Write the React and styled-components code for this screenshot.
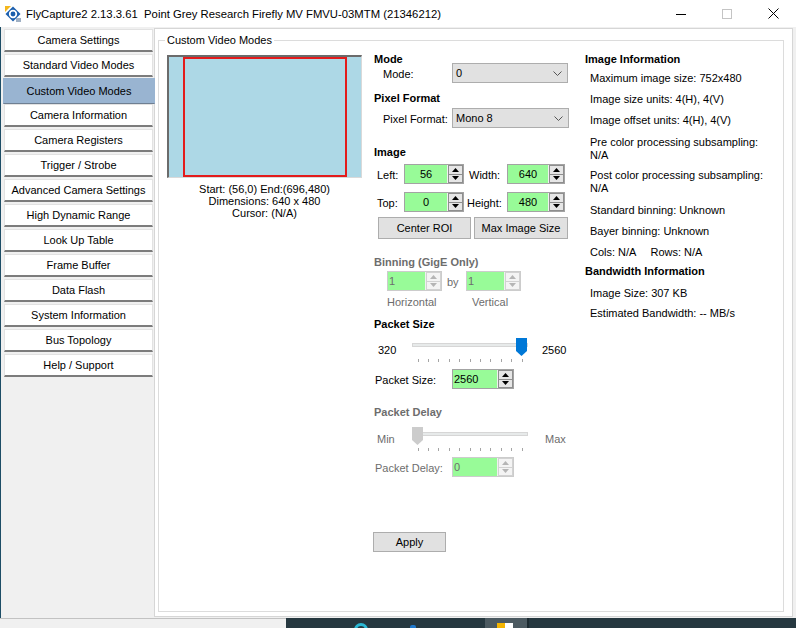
import React from "react";
import styled, { createGlobalStyle, css } from "styled-components";

const Global = createGlobalStyle`
  html, body { margin: 0; padding: 0; width: 796px; height: 628px; overflow: hidden; background: #f0f0f0; }
  * { box-sizing: border-box; }
  body { font-family: "Liberation Sans", Arial, sans-serif; font-size: 11px; color: #000; }
`;

const Window = styled.div`
  width: 796px;
  height: 628px;
  display: flex;
  flex-direction: column;
  overflow: hidden;
`;

/* ---------- title bar ---------- */
const TitleBar = styled.div`
  height: 27px;
  flex-shrink: 0;
  background: #fff;
  display: flex;
  align-items: center;
`;
const AppIcon = styled.svg`
  width: 16px;
  height: 16px;
  margin: 0 5px 0 5px;
  flex-shrink: 0;
`;
const TitleText = styled.div`
  flex: 1;
  font-family: "Liberation Sans", Arial, sans-serif;
  font-size: 11.3px;
  color: #000;
  white-space: nowrap;
`;
const Controls = styled.div`
  display: flex;
  height: 27px;
`;
const CtrlBtn = styled.div`
  width: 46px;
  height: 27px;
  display: flex;
  align-items: center;
  justify-content: center;
`;

/* ---------- body ---------- */
const Body = styled.div`
  flex: 1;
  min-height: 0;
  display: flex;
  border-left: 1px solid #1d4d66;
  padding: 1px 3px 1px 0;
`;
const Sidebar = styled.div`
  width: 153px;
  flex-shrink: 0;
  padding: 1px 0 0 3px;
  display: flex;
  flex-direction: column;
`;
const NavButton = styled.div`
  width: 149px;
  height: 23px;
  margin-bottom: 2px;
  background: #fff;
  border: 1px solid #e2e2e2;
  border-bottom: 2px solid #7c7c7c;
  display: flex;
  align-items: center;
  justify-content: center;
  white-space: nowrap;
  ${(p) =>
    p.$active &&
    css`
      background: #99b4d1;
      width: 152px;
      height: 26px;
      margin: -1px 0 0 -1px;
      border-color: #99b4d1;
      border-bottom: 1px solid #6f7f92;
      position: relative;
      z-index: 1;
    `}
`;

const MainPanel = styled.div`
  flex: 1;
  min-width: 0;
  background: #fff;
  border: 1px solid #d6d6d6;
  padding: 11px 8px 4px 3px;
  display: flex;
  flex-direction: column;
`;
const Group = styled.div`
  flex: 1;
  position: relative;
  border: 1px solid #dcdcdc;
  padding: 12px 0 0 8px;
  display: flex;
`;
const Legend = styled.span`
  position: absolute;
  top: -7px;
  left: 6px;
  padding: 0 2px;
  background: #fff;
  line-height: 13px;
`;

/* ---------- preview column ---------- */
const PreviewCol = styled.div`
  width: 195px;
  flex-shrink: 0;
  margin-top: 2px;
  display: flex;
  flex-direction: column;
`;
const Preview = styled.div`
  position: relative;
  width: 195px;
  height: 123px;
  background: #add8e6;
  border-top: 2px solid #6b6b6b;
  border-left: 2px solid #6b6b6b;
  border-right: 1px solid #d9d9d9;
  border-bottom: 1px solid #d9d9d9;
`;
const Roi = styled.div`
  position: absolute;
  border: 2px solid #e31b1b;
`;
const Caption = styled.div`
  margin-top: 5px;
  text-align: center;
  line-height: 12px;
`;

/* ---------- middle column ---------- */
const MiddleCol = styled.div`
  width: 211px;
  flex-shrink: 0;
  margin-left: 12px;
  display: flex;
  flex-direction: column;
`;
const Heading = styled.div`
  font-weight: bold;
  line-height: 13px;
  height: 13px;
  margin-top: ${(p) => p.$mt || 0}px;
  color: ${(p) => (p.$disabled ? "#6d6d6d" : "#000")};
  white-space: nowrap;
`;
const Row = styled.div`
  display: flex;
  align-items: center;
  height: ${(p) => p.$h || 20}px;
  margin-top: ${(p) => p.$mt || 0}px;
  margin-left: ${(p) => p.$ml || 0}px;
`;
const Label = styled.div`
  width: ${(p) => p.$w}px;
  padding-left: ${(p) => p.$pl || 0}px;
  flex-shrink: 0;
  white-space: nowrap;
  padding-top: 2px;
  color: ${(p) => (p.$disabled ? "#6d6d6d" : "#000")};
`;
const Combo = styled.div`
  width: ${(p) => p.$w}px;
  height: 20px;
  background: #e1e1e1;
  border: 1px solid #adadad;
  display: flex;
  align-items: center;
  justify-content: space-between;
  padding: 0 5px 0 3px;
`;
const SpinBox = styled.div`
  width: ${(p) => p.$w}px;
  height: 20px;
  display: flex;
  border: 1px solid ${(p) => (p.$disabled ? "#cccccc" : "#a3a3a3")};
  background: #98fb98;
`;
const SpinValue = styled.div`
  flex: 1;
  display: flex;
  align-items: center;
  justify-content: ${(p) => (p.$center ? "center" : "flex-start")};
  padding: ${(p) => (p.$center ? "0 0 1px 0" : "0 0 1px 1px")};
  color: ${(p) => (p.$disabled ? "#6d6d6d" : "#000")};
`;
const SpinButtons = styled.div`
  width: 16px;
  flex-shrink: 0;
  background: #f0f0f0;
  display: flex;
  flex-direction: column;
  padding: 0 0 0 1px;
`;
const SpinArrow = styled.div`
  flex: 1;
  display: flex;
  align-items: center;
  justify-content: center;
  background: ${(p) => (p.$disabled ? "#f4f4f4" : "#e6e6e6")};
  border: 1px solid ${(p) => (p.$disabled ? "#d2d2d2" : "#8e8e8e")};
  & + & { border-top: none; }
`;
const PushButton = styled.div`
  width: ${(p) => p.$w}px;
  height: ${(p) => p.$h || 22}px;
  margin-left: ${(p) => p.$ml || 0}px;
  margin-top: ${(p) => p.$mt || 0}px;
  background: #e1e1e1;
  border: 1px solid #adadad;
  display: flex;
  align-items: center;
  justify-content: center;
  white-space: nowrap;
`;
const SliderRow = styled.div`
  display: flex;
  height: 24px;
  margin-top: ${(p) => p.$mt || 0}px;
`;
const SliderEnd = styled.div`
  width: ${(p) => p.$w || "auto"};
  padding-left: ${(p) => p.$pl || 0}px;
  padding-top: ${(p) => p.$pt || 6}px;
  line-height: 13px;
  color: ${(p) => (p.$disabled ? "#6d6d6d" : "#000")};
  flex-shrink: 0;
`;
const TrackSvg = styled.svg`
  width: 116px;
  height: 24px;
  flex-shrink: 0;
  display: block;
`;

/* ---------- right column ---------- */
const RightCol = styled.div`
  flex: 1;
  display: flex;
  flex-direction: column;
`;
const InfoLine = styled.div`
  padding-left: 5px;
  line-height: 13px;
  margin-top: ${(p) => p.$mt || 0}px;
  white-space: nowrap;
`;
const Gap = styled.span`
  display: inline-block;
  width: ${(p) => p.$w}px;
`;

/* ---------- taskbar ---------- */
const Taskbar = styled.div`
  height: 10px;
  flex-shrink: 0;
  display: flex;
`;
const BehindWindow = styled.div`
  width: 286px;
  background: #f0f0f0;
  border-top: 1px solid #c2c2c2;
`;
const TaskArea = styled.div`
  flex: 1;
  background: #263840;
  display: flex;
  overflow: hidden;
`;
const TaskRing = styled.div`
  flex-shrink: 0;
  width: 14px;
  height: 14px;
  margin: 5px 0 0 68px;
  border-radius: 50%;
  border: 3px solid #2bb8d4;
`;
const TaskDot = styled.div`
  flex-shrink: 0;
  width: 6px;
  height: 6px;
  margin: 7px 0 0 42px;
  border-radius: 2px 2px 0 0;
  background: #1f78cc;
`;
const TaskTile = styled.div`
  flex-shrink: 0;
  width: 44px;
  margin-left: 69px;
  background: #4c5a61;
  display: flex;
  padding: 5px 0 0 12px;
  border-right: 2px solid #1c2a30;
`;
const TaskSquare = styled.div`
  width: 8px;
  height: 5px;
  background: ${(p) => p.$c};
`;

/* ---------- pieces ---------- */
const Chevron = () => (
  <svg width="9" height="5" viewBox="0 0 9 5">
    <polyline points="0.5,0.5 4.5,4.5 8.5,0.5" fill="none" stroke="#555" strokeWidth="1" />
  </svg>
);

const Tri = ({ up, disabled }) => (
  <svg width="7" height="4" viewBox="0 0 7 4">
    <polygon
      points={up ? "3.5,0 7,4 0,4" : "0,0 7,0 3.5,4"}
      fill={disabled ? "#b5b5b5" : "#000"}
    />
  </svg>
);

const Spin = ({ w, value, center, disabled }) => (
  <SpinBox $w={w} $disabled={disabled}>
    <SpinValue $center={center} $disabled={disabled}>{value}</SpinValue>
    <SpinButtons>
      <SpinArrow $disabled={disabled}><Tri up disabled={disabled} /></SpinArrow>
      <SpinArrow $disabled={disabled}><Tri disabled={disabled} /></SpinArrow>
    </SpinButtons>
  </SpinBox>
);

const Track = ({ pos, disabled }) => {
  const ticks = Array.from({ length: 11 }, (_, i) => 5.5 + i * 10.4);
  const cx = 5.5 + pos * 104;
  const c = disabled ? "#cccccc" : "#0078d7";
  return (
    <TrackSvg viewBox="0 0 116 24">
      <rect x="0.5" y="5.5" width="115" height="3" fill="#e7eaea" stroke="#d6d6d6" />
      {ticks.map((t) => (
        <line key={t} x1={Math.round(t) + 0.5} y1="21" x2={Math.round(t) + 0.5} y2="24" stroke="#a5a5a5" />
      ))}
      <polygon
        points={`${cx - 5.5},0 ${cx + 5.5},0 ${cx + 5.5},13 ${cx},18 ${cx - 5.5},13`}
        fill={c}
      />
    </TrackSvg>
  );
};

const navItems = [
  "Camera Settings",
  "Standard Video Modes",
  "Custom Video Modes",
  "Camera Information",
  "Camera Registers",
  "Trigger / Strobe",
  "Advanced Camera Settings",
  "High Dynamic Range",
  "Look Up Table",
  "Frame Buffer",
  "Data Flash",
  "System Information",
  "Bus Topology",
  "Help / Support",
];

const roi = { left: 56, top: 0, width: 640, height: 480, maxW: 752, maxH: 480 };

export default function App() {
  const innerW = 192;
  const innerH = 120;
  const sx = innerW / roi.maxW;
  const sy = innerH / roi.maxH;
  return (
    <Window>
      <Global />
      <TitleBar>
        <AppIcon viewBox="0 0 16 16">
          <polygon points="8,0.5 15.5,8 8,15.5 0.5,8" fill="#1c5fad" />
          <polygon points="0,0 6,0 0,6" fill="#f4b71c" />
          <circle cx="8" cy="8" r="3.3" fill="none" stroke="#fff" strokeWidth="1.7" />
          <circle cx="8" cy="8" r="1.3" fill="#1c5fad" />
          <rect x="11" y="12" width="5" height="4" fill="#9fb0c4" />
        </AppIcon>
        <TitleText>FlyCapture2 2.13.3.61&nbsp;&nbsp;Point Grey Research Firefly MV FMVU-03MTM (21346212)</TitleText>
        <Controls>
          <CtrlBtn>
            <svg width="10" height="10" viewBox="0 0 10 10">
              <line x1="0" y1="5.5" x2="10" y2="5.5" stroke="#000" />
            </svg>
          </CtrlBtn>
          <CtrlBtn>
            <svg width="10" height="10" viewBox="0 0 10 10">
              <rect x="0.5" y="0.5" width="9" height="9" fill="none" stroke="#c4c4c4" />
            </svg>
          </CtrlBtn>
          <CtrlBtn>
            <svg width="11" height="11" viewBox="0 0 11 11">
              <line x1="0.5" y1="0.5" x2="10.5" y2="10.5" stroke="#000" />
              <line x1="10.5" y1="0.5" x2="0.5" y2="10.5" stroke="#000" />
            </svg>
          </CtrlBtn>
        </Controls>
      </TitleBar>

      <Body>
        <Sidebar>
          {navItems.map((n) => (
            <NavButton key={n} $active={n === "Custom Video Modes"}>
              {n}
            </NavButton>
          ))}
        </Sidebar>

        <MainPanel>
          <Group>
            <Legend>Custom Video Modes</Legend>

            <PreviewCol>
              <Preview>
                <Roi
                  style={{
                    left: Math.round(roi.left * sx),
                    top: Math.round(roi.top * sy),
                    width: Math.round(roi.width * sx) + 1,
                    height: Math.round(roi.height * sy),
                  }}
                />
              </Preview>
              <Caption>
                Start: (56,0) End:(696,480)
                <br />
                Dimensions: 640 x 480
                <br />
                Cursor: (N/A)
              </Caption>
            </PreviewCol>

            <MiddleCol>
              <Heading>Mode</Heading>
              <Row $mt={-3}>
                <Label $w={78} $pl={9}>Mode:</Label>
                <Combo $w={116}>
                  <span>0</span>
                  <Chevron />
                </Combo>
              </Row>

              <Heading $mt={9}>Pixel Format</Heading>
              <Row $mt={3}>
                <Label $w={78} $pl={9}>Pixel Format:</Label>
                <Combo $w={117}>
                  <span>Mono 8</span>
                  <Chevron />
                </Combo>
              </Row>

              <Heading $mt={18}>Image</Heading>
              <Row $mt={5}>
                <Label $w={30} $pl={3}>Left:</Label>
                <Spin w={60} value="56" center />
                <Label $w={43} $pl={5}>Width:</Label>
                <Spin w={58} value="640" center />
              </Row>
              <Row $mt={8}>
                <Label $w={30} $pl={3}>Top:</Label>
                <Spin w={60} value="0" center />
                <Label $w={43} $pl={3}>Height:</Label>
                <Spin w={58} value="480" center />
              </Row>
              <Row $mt={5} $h={22} $ml={4}>
                <PushButton $w={93}>Center ROI</PushButton>
                <PushButton $w={94} $ml={3}>Max Image Size</PushButton>
              </Row>

              <Heading $mt={17} $disabled>Binning (GigE Only)</Heading>
              <Row $mt={2} $ml={13}>
                <Spin w={55} value="1" disabled />
                <Label $w={24} $pl={5} $disabled>by</Label>
                <Spin w={55} value="1" disabled />
              </Row>
              <Row $mt={3} $h={13} $ml={13}>
                <Label $w={79} $disabled>Horizontal</Label>
                <Label $w={60} $pl={6} $disabled>Vertical</Label>
              </Row>

              <Heading $mt={11}>Packet Size</Heading>
              <SliderRow $mt={7}>
                <SliderEnd $w="38px" $pl={4}>320</SliderEnd>
                <Track pos={1} />
                <SliderEnd $pl={14}>2560</SliderEnd>
              </SliderRow>
              <Row $mt={7}>
                <Label $w={78} $pl={1}>Packet Size:</Label>
                <Spin w={62} value="2560" />
              </Row>

              <Heading $mt={17} $disabled>Packet Delay</Heading>
              <SliderRow $mt={8}>
                <SliderEnd $w="38px" $pl={3} $disabled>Min</SliderEnd>
                <Track pos={0} disabled />
                <SliderEnd $pl={17} $disabled>Max</SliderEnd>
              </SliderRow>
              <Row $mt={6}>
                <Label $w={78} $pl={1} $disabled>Packet Delay:</Label>
                <Spin w={62} value="0" disabled />
              </Row>

              <PushButton $w={73} $h={20} $ml={-1} $mt={55}>Apply</PushButton>
            </MiddleCol>

            <RightCol>
              <Heading>Image Information</Heading>
              <InfoLine $mt={6}>Maximum image size: 752x480</InfoLine>
              <InfoLine $mt={8}>Image size units: 4(H), 4(V)</InfoLine>
              <InfoLine $mt={8}>Image offset units: 4(H), 4(V)</InfoLine>
              <InfoLine $mt={9}>
                Pre color processing subsampling:
                <br />
                N/A
              </InfoLine>
              <InfoLine $mt={7}>
                Post color processing subsampling:
                <br />
                N/A
              </InfoLine>
              <InfoLine $mt={9}>Standard binning: Unknown</InfoLine>
              <InfoLine $mt={8}>Bayer binning: Unknown</InfoLine>
              <InfoLine $mt={8}>
                Cols: N/A<Gap $w={14} />Rows: N/A
              </InfoLine>
              <Heading $mt={6}>Bandwidth Information</Heading>
              <InfoLine $mt={9}>Image Size: 307 KB</InfoLine>
              <InfoLine $mt={7}>Estimated Bandwidth: -- MB/s</InfoLine>
            </RightCol>
          </Group>
        </MainPanel>
      </Body>

      <Taskbar>
        <BehindWindow />
        <TaskArea>
          <TaskRing />
          <TaskDot />
          <TaskTile>
            <TaskSquare $c="#f4b400" />
            <TaskSquare $c="#ffffff" />
          </TaskTile>
        </TaskArea>
      </Taskbar>
    </Window>
  );
}
